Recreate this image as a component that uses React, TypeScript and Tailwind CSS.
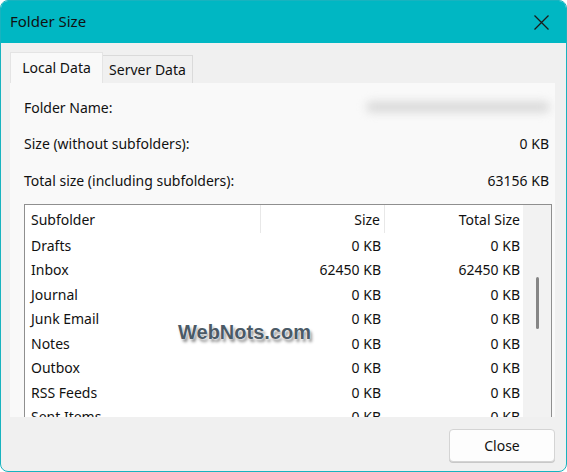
import React from 'react';

const rows: [string, string, string][] = [
  ['Drafts', '0 KB', '0 KB'],
  ['Inbox', '62450 KB', '62450 KB'],
  ['Journal', '0 KB', '0 KB'],
  ['Junk Email', '0 KB', '0 KB'],
  ['Notes', '0 KB', '0 KB'],
  ['Outbox', '0 KB', '0 KB'],
  ['RSS Feeds', '0 KB', '0 KB'],
  ['Sent Items', '0 KB', '0 KB'],
];

function CloseIcon() {
  return (
    <svg width="15" height="15" viewBox="0 0 15 15" fill="none">
      <path d="M0.5 0.5L14.5 14.5M14.5 0.5L0.5 14.5" stroke="#1b1b1b" strokeWidth="1.3" />
    </svg>
  );
}

export default function App() {
  return (
    <div className="w-[567px] h-[472px] bg-white font-['Noto_Sans',sans-serif] text-[#111]">
      <div className="h-full flex flex-col rounded-[8px] border border-[#18b3bf] overflow-hidden bg-[#f0f0f0]">
        {/* title bar */}
        <div className="h-[42px] shrink-0 bg-[#00b7c3] flex items-center justify-between pl-[9px] pr-[17px]">
          <span className="text-[15px] leading-none pb-[1px]">Folder Size</span>
          <CloseIcon />
        </div>

        <div className="flex-1 flex flex-col pl-[9px] pr-[11px] pt-[9px]">
          {/* tabs */}
          <div className="h-[31px] flex items-end text-[14px]">
            <div className="w-[93px] h-[31px] bg-[#f9f9f9] border border-b-0 border-[#e4e4e4] flex items-center justify-center pb-[1px]">
              Local Data
            </div>
            <div className="w-[90px] h-[28px] bg-[#f0f0f0] border border-b-0 border-l-0 border-[#dadada] flex items-center justify-center">
              Server Data
            </div>
          </div>

          {/* panel */}
          <div className="h-[334px] bg-[#f9f9f9] flex flex-col pl-[14px] pr-[3px] text-[14px] overflow-hidden">
            <div className="h-[20px] mt-[14px] flex items-center justify-between">
              <span>Folder Name:</span>
              <div className="w-[184px] h-[12px] mr-[2px] rounded-full bg-[#dcdcdc] blur-[4px]" />
            </div>
            <div className="h-[20px] mt-[16px] flex items-center justify-between pr-[3px]">
              <span>Size (without subfolders):</span>
              <span>0 KB</span>
            </div>
            <div className="h-[20px] mt-[17px] flex items-center justify-between pr-[3px]">
              <span>Total size (including subfolders):</span>
              <span>63156 KB</span>
            </div>

            {/* list */}
            <div className="relative mt-[14px] flex-1 flex border border-b-0 border-[#8f8f8f] bg-white">
              <div className="flex-1 flex flex-col">
                <div className="h-[28px] shrink-0 flex items-center">
                  <div className="w-[236px] pl-[6px] border-r border-[#e8e8e8] h-full flex items-center">Subfolder</div>
                  <div className="w-[124px] pr-[4px] border-r border-[#e8e8e8] h-full flex items-center justify-end">Size</div>
                  <div className="flex-1 pr-[3px] h-full flex items-center justify-end">Total Size</div>
                </div>
                {rows.map(([name, size, total]) => (
                  <div key={name} className="h-[24.5px] shrink-0 flex items-center">
                    <div className="w-[236px] pl-[6px]">{name}</div>
                    <div className="w-[124px] pr-[4px] text-right">{size}</div>
                    <div className="flex-1 pr-[3px] text-right">{total}</div>
                  </div>
                ))}
              </div>
              {/* scrollbar */}
              <div className="w-[28px] bg-[#f2f2f2] flex justify-center">
                <div className="w-[3px] h-[52px] mt-[72px] rounded-full bg-[#858585]" />
              </div>

              <span className="absolute left-[153px] top-[112px] font-['Liberation_Sans',sans-serif] font-bold text-[20px] text-[#4b5a66] [text-shadow:0_0_1px_#fff,0_0_2px_#fff,2px_3px_3px_rgba(0,0,0,0.45)]">
                WebNots.com
              </span>
            </div>
          </div>

          {/* footer */}
          <div className="flex-1 flex justify-end items-start pt-[12px]">
            <button className="w-[106px] h-[33px] bg-[#fdfdfd] border border-[#d4d4d4] rounded-[4px] text-[14px] shadow-[0_1px_0_#c8c8c8]">
              Close
            </button>
          </div>
        </div>
      </div>
    </div>
  );
}
